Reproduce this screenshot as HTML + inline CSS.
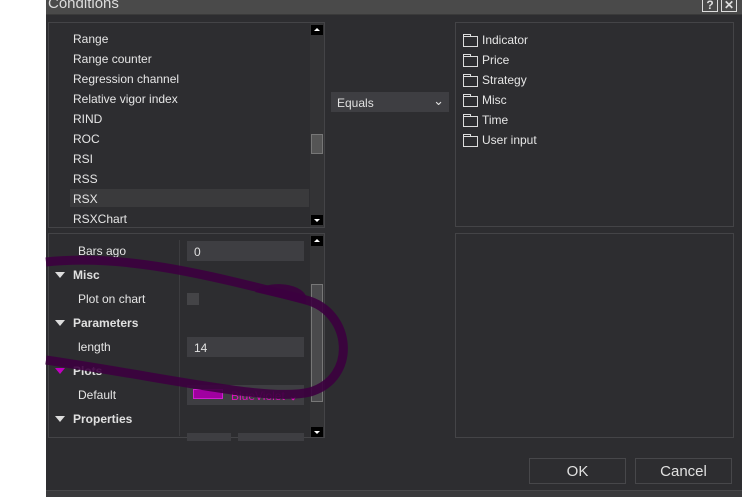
<!DOCTYPE html>
<html><head><style>
*{margin:0;padding:0;box-sizing:border-box}
body{width:742px;height:497px;background:#fff;position:relative;overflow:hidden;font-family:"Liberation Sans",Arial,sans-serif;font-size:12px;color:#e0e0e0}
.dlg{position:absolute;left:46px;top:0;width:696px;height:497px;background:#2d2d30}
.title{position:absolute;left:0;top:0;width:696px;height:15px;background:#4a4a4a;border-bottom:1px solid #3a3a3a}
.title span{position:absolute;left:2px;top:-5px;font-size:15px;color:#dcdcdc}
.tb{position:absolute;top:-2px;width:16px;height:14px;border:1px solid #ddd;color:#ddd;font-size:12px;line-height:12px;text-align:center;font-weight:bold}
.p{position:absolute;border:1px solid #444447;background:#2d2d30}
.it{position:absolute;left:24px;font-size:12px;color:#e6e6e6;white-space:nowrap}
.sb{position:absolute;right:0;top:0;width:14px;height:100%;background:#333335}
.ar{position:absolute;left:1px;width:12px;height:10px;background:#000}
.ar:after{content:"";position:absolute;left:3px;border-left:3px solid transparent;border-right:3px solid transparent}
.up:after{top:3px;border-bottom:3px solid #fff}
.dn:after{top:4px;border-top:3px solid #fff}
.thumb{position:absolute;left:1px;width:12px;border:1px solid #777;background:#555}
.inp{position:absolute;left:138px;width:117px;height:20px;background:#3e3e42;padding:4px 7px;font-size:12px;white-space:nowrap}
.cat{position:absolute;left:24px;font-weight:bold}
.tri{position:absolute;left:6px;width:0;height:0;border-left:5px solid transparent;border-right:5px solid transparent;border-top:6px solid #ddd}
.fold{position:absolute;left:7px;width:15px;height:11px;border:1px solid #ddd}
.fold:before{content:"";position:absolute;left:-1px;top:-3px;width:6px;height:2px;border:1px solid #ddd;border-bottom:none}
.btn{position:absolute;top:458px;width:97px;height:26px;border:1px solid #47474a;background:#2d2d30;text-align:center;line-height:26px;font-size:15px;color:#e0e0e0}
</style></head><body>
<div class="dlg">
<div class="title"><span>Conditions</span>
<div class="tb" style="left:656px">?</div><div class="tb" style="left:675px">✕</div></div>

<div class="p" style="left:2px;top:22px;width:277px;height:206px">
<div style="position:absolute;left:21px;top:166px;width:239px;height:18px;background:#3a3a3c"></div>
<div class="it" style="top:9px">Range</div>
<div class="it" style="top:29px">Range counter</div>
<div class="it" style="top:49px">Regression channel</div>
<div class="it" style="top:69px">Relative vigor index</div>
<div class="it" style="top:89px">RIND</div>
<div class="it" style="top:109px">ROC</div>
<div class="it" style="top:129px">RSI</div>
<div class="it" style="top:149px">RSS</div>
<div class="it" style="top:169px">RSX</div>
<div class="it" style="top:189px">RSXChart</div>
<div class="sb"><div class="ar up" style="top:2px"></div><div class="thumb" style="top:111px;height:20px"></div><div class="ar dn" style="top:192px"></div></div>
</div>

<div class="p" style="left:2px;top:233px;width:277px;height:205px">
<div style="position:absolute;left:130px;top:6px;width:1px;height:196px;background:#3c3c3f"></div>
<div class="it" style="left:29px;top:10px">Bars ago</div><div class="inp" style="top:7px">0</div>
<div class="tri" style="top:38px"></div><div class="cat" style="top:34px">Misc</div>
<div class="it" style="left:29px;top:58px">Plot on chart</div><div style="position:absolute;left:138px;top:59px;width:12px;height:12px;background:#444447"></div>
<div class="tri" style="top:86px"></div><div class="cat" style="top:82px">Parameters</div>
<div class="it" style="left:29px;top:106px">length</div><div class="inp" style="top:103px">14</div>
<div class="tri" style="top:134px;border-top-color:#c000c0"></div><div class="cat" style="top:130px">Plots</div>
<div class="it" style="left:29px;top:154px">Default</div><div class="inp" style="top:151px;color:#e010c0;padding-left:44px;font-size:12px">BlueViolet <b>⌄</b></div>
<div style="position:absolute;left:144px;top:155px;width:30px;height:10px;background:#a000a0;border:1px solid #d020d0"></div>
<div class="tri" style="top:182px"></div><div class="cat" style="top:178px">Properties</div>
<div class="inp" style="top:199px;width:44px;height:6px"></div><div class="inp" style="left:189px;top:199px;width:66px;height:6px"></div>
<div class="sb"><div class="ar up" style="top:2px"></div><div class="thumb" style="top:50px;height:118px;background:#4a4a4c"></div><div class="ar dn" style="top:193px"></div></div>
</div>

<div style="position:absolute;left:285px;top:92px;width:118px;height:20px;background:#3e3e42;padding:4px 6px;font-size:12px">Equals<span style="position:absolute;right:5px;top:1px;font-size:13px">⌄</span></div>

<div class="p" style="left:409px;top:22px;width:279px;height:205px">
<div class="fold" style="top:13px"></div><div class="it" style="left:26px;top:10px">Indicator</div>
<div class="fold" style="top:33px"></div><div class="it" style="left:26px;top:30px">Price</div>
<div class="fold" style="top:53px"></div><div class="it" style="left:26px;top:50px">Strategy</div>
<div class="fold" style="top:73px"></div><div class="it" style="left:26px;top:70px">Misc</div>
<div class="fold" style="top:93px"></div><div class="it" style="left:26px;top:90px">Time</div>
<div class="fold" style="top:113px"></div><div class="it" style="left:26px;top:110px">User input</div>
</div>
<div class="p" style="left:409px;top:233px;width:279px;height:205px"></div>

<div class="btn" style="left:483px">OK</div>
<div class="btn" style="left:589px">Cancel</div>
<div style="position:absolute;left:0;top:490px;width:696px;height:7px;background:#3a3a3c;border-top:1px solid #48484a"></div>
</div>

<svg style="position:absolute;left:0;top:0" width="742" height="497">
<path d="M46 262 C120 254 200 272 306 300 C352 312 358 378 310 392 C270 402 180 380 46 360" fill="none" stroke="#3c003f" stroke-width="9" opacity="0.9"/>
<path d="M255 292 C265 280 300 282 306 296 L306 304 Z" fill="#3c003f" opacity="0.9"/>
</svg>
</body></html>
